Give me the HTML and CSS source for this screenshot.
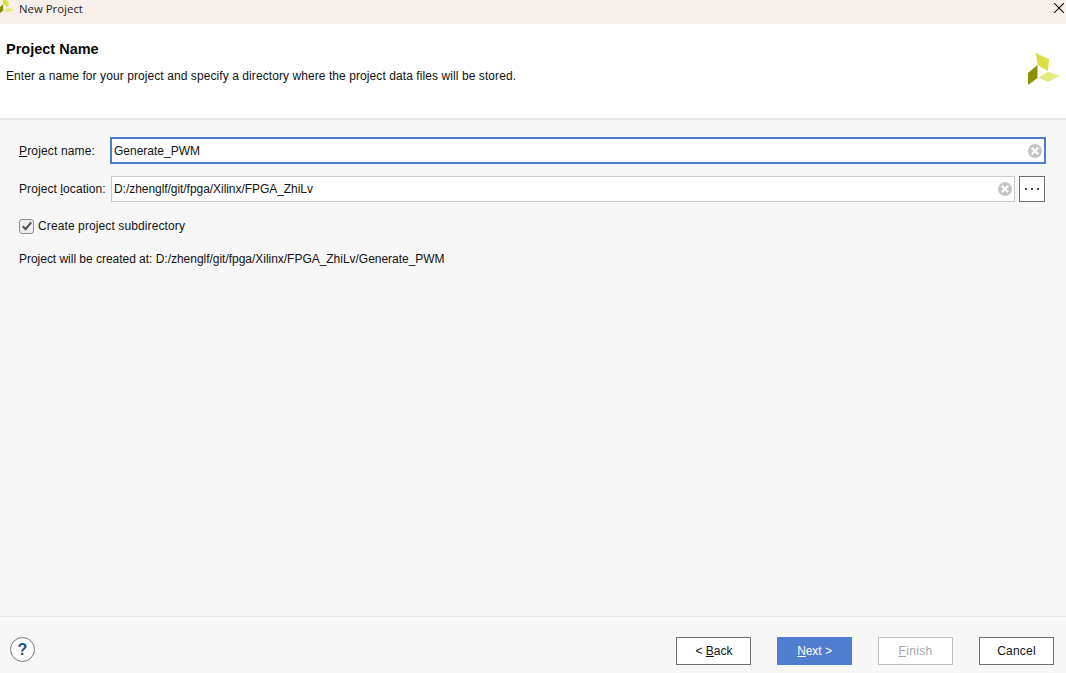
FILE: index.html
```html
<!DOCTYPE html>
<html lang="en">
<head>
<meta charset="utf-8">
<title>New Project</title>
<link rel="stylesheet" href="styles.css">
</head>
<body>
<div class="window">
  <div class="titlebar">
    <svg class="title-logo" viewBox="4 3 33 33" width="16" height="16" aria-hidden="true">
      <polygon class="leaf-mid" points="8.7,0 22,6.3 21,18 10.7,12"/>
      <polygon class="leaf-dark" points="1,20 10.5,12 10.5,25 1,32"/>
      <polygon class="leaf-light" points="11.3,24.7 21,18.7 33,23 21,28.7"/>
    </svg>
    <span class="title-text">New Project</span>
    <svg class="close" viewBox="0 0 10 10" width="10" height="10" aria-hidden="true">
      <path d="M0 0 L10 10 M10 0 L0 10"/>
    </svg>
  </div>
  <header class="header">
    <div class="header-text">
      <h1 class="heading">Project Name</h1>
      <p class="subheading">Enter a name for your project and specify a directory where the project data files will be stored.</p>
    </div>
    <svg class="header-logo" viewBox="0 0 33 33" width="33" height="33" aria-hidden="true">
      <polygon class="leaf-mid" points="8.7,0 22,6.3 21,18 10.7,12"/>
      <polygon class="leaf-dark" points="1,20 10.5,12 10.5,25 1,32"/>
      <polygon class="leaf-light" points="11.3,24.7 21,18.7 33,23 21,28.7"/>
    </svg>
  </header>
  <main class="content">
    <div class="row row-name">
      <label class="label label-name"><u>P</u>roject name:</label>
      <div class="field field-active">
        <span class="value value-name">Generate_PWM</span>
        <svg class="clear" viewBox="0 0 14 14" width="14" height="14" aria-hidden="true">
          <circle cx="7" cy="7" r="7"/>
          <path d="M3.8 3.8 L10.2 10.2 M10.2 3.8 L3.8 10.2"/>
        </svg>
      </div>
    </div>
    <div class="row row-location">
      <label class="label label-location">Project <u>l</u>ocation:</label>
      <div class="field">
        <span class="value value-location">D:/zhenglf/git/fpga/Xilinx/FPGA_ZhiLv</span>
        <svg class="clear" viewBox="0 0 14 14" width="14" height="14" aria-hidden="true">
          <circle cx="7" cy="7" r="7"/>
          <path d="M3.8 3.8 L10.2 10.2 M10.2 3.8 L3.8 10.2"/>
        </svg>
      </div>
      <button class="browse" type="button" aria-label="Browse">
        <span class="dot"></span><span class="dot"></span><span class="dot"></span>
      </button>
    </div>
    <div class="check-row">
      <span class="checkbox">
        <svg viewBox="0 0 12 12" width="12" height="12" aria-hidden="true"><path d="M1.8 6.2 L4.6 9.2 L10.2 2.4"/></svg>
      </span>
      <span class="check-label">Create project subdirectory</span>
    </div>
    <p class="created">Project will be created at: D:/zhenglf/git/fpga/Xilinx/FPGA_ZhiLv/Generate_PWM</p>
  </main>
  <footer class="footer">
    <span class="help">?</span>
    <div class="buttons">
      <button class="btn btn-back" type="button">&lt; <u>B</u>ack</button>
      <button class="btn btn-primary" type="button"><u>N</u>ext &gt;</button>
      <button class="btn btn-disabled" type="button"><u>F</u>inish</button>
      <button class="btn btn-cancel" type="button">Cancel</button>
    </div>
  </footer>
</div>
</body>
</html>
```
FILE: styles.css
```css
* { box-sizing: border-box; }
html, body { margin: 0; height: 100%; overflow: hidden; }
body { font-family: "Liberation Sans", Arial, sans-serif; font-size: 12px; color: #111; }
.window { display: flex; flex-direction: column; height: 673px; background: #f7f7f7; }

.titlebar { flex: none; height: 24px; background: #f7f0ea; display: flex; align-items: center; position: relative; }
.title-logo { position: absolute; left: 0; top: 0; overflow: hidden; }
.title-text { margin-left: 19px; font-family: "Open Sans", sans-serif; font-size: 11.4px; color: #222; margin-top: -7px; }
.close { margin-left: auto; margin-right: 2px; margin-top: -8px; }
.close path { stroke: #111; stroke-width: 1.1; fill: none; }

.leaf-mid { fill: #d8df3f; }
.leaf-dark { fill: #8a9000; }
.leaf-light { fill: #e3ea7f; }

.header { flex: none; height: 96px; background: #fff; border-bottom: 2px solid #e6e6e6; display: flex; justify-content: space-between; padding: 17px 6px 0 6px; }
.heading { margin: 0; font-size: 14.5px; line-height: 16px; font-weight: bold; color: #0a0a0a; }
.subheading { margin: 12px 0 0; font-size: 12px; line-height: 14px; letter-spacing: 0.08px; color: #111; }
.header-logo { margin-top: 12px; }

.content { flex: 1; padding: 17px 20px 0 19px; }
.row { display: flex; align-items: center; }
.row-name { height: 27px; }
.row-location { height: 26px; margin-top: 12px; padding-right: 1px; }
.label { width: 92px; flex: none; color: #111; white-space: nowrap; letter-spacing: 0.15px; }
.label-name { width: 91px; }
.label-location { letter-spacing: 0.08px; }
.field { height: 100%; flex: 1; min-width: 0; background: #fff; border: 1px solid #c8c8c8; display: flex; align-items: center; justify-content: space-between; padding: 0 2px 0 2px; }
.field-active { border: 2px solid #4d7cc9; padding: 0 2px 0 2px; }
.value { color: #111; }
.value-location { letter-spacing: -0.05px; }
.clear circle { fill: #c4c4c4; }
.clear path { stroke: #fff; stroke-width: 2; fill: none; }
.browse { flex: none; width: 26px; height: 26px; margin-left: 4px; padding: 0; background: #fff; border: 1px solid #6e6e6e; display: flex; align-items: center; justify-content: center; gap: 4px; }
.dot { width: 2px; height: 2px; background: #444; }

.check-row { display: flex; align-items: center; margin-top: 16px; height: 16px; }
.checkbox { width: 15px; height: 15px; border: 1px solid #8f8f8f; border-radius: 3px; background: #f0f0f0; display: flex; align-items: center; justify-content: center; }
.checkbox path { stroke: #555; stroke-width: 2.2; fill: none; }
.check-label { margin-left: 4px; letter-spacing: 0.11px; }
.created { margin: 18px 0 0; line-height: 14px; letter-spacing: -0.025px; }

.footer { flex: none; height: 57px; border-top: 1px solid #e6e6e6; display: flex; align-items: flex-start; justify-content: space-between; padding: 20px 12px 0 10px; }
.help { width: 25px; height: 25px; border: 1px solid #777; border-radius: 50%; background: #fff; color: #1f4e8c; font-weight: bold; font-size: 16px; display: flex; align-items: center; justify-content: center; }
.buttons { display: flex; gap: 26px; }
.btn { width: 75px; height: 28px; padding: 0; background: #fff; border: 1px solid #6e6e6e; font: inherit; color: #111; }
.btn-back { padding-left: 1px; }
.btn-cancel { letter-spacing: 0.2px; }
.btn-primary { background: #4f7dcf; border-color: #4f7dcf; color: #fff; padding-left: 2px; padding-right: 2px; letter-spacing: -0.05px; }
.btn-disabled { border-color: #bdbdbd; color: #a6a6a6; letter-spacing: 0.35px; }
```
